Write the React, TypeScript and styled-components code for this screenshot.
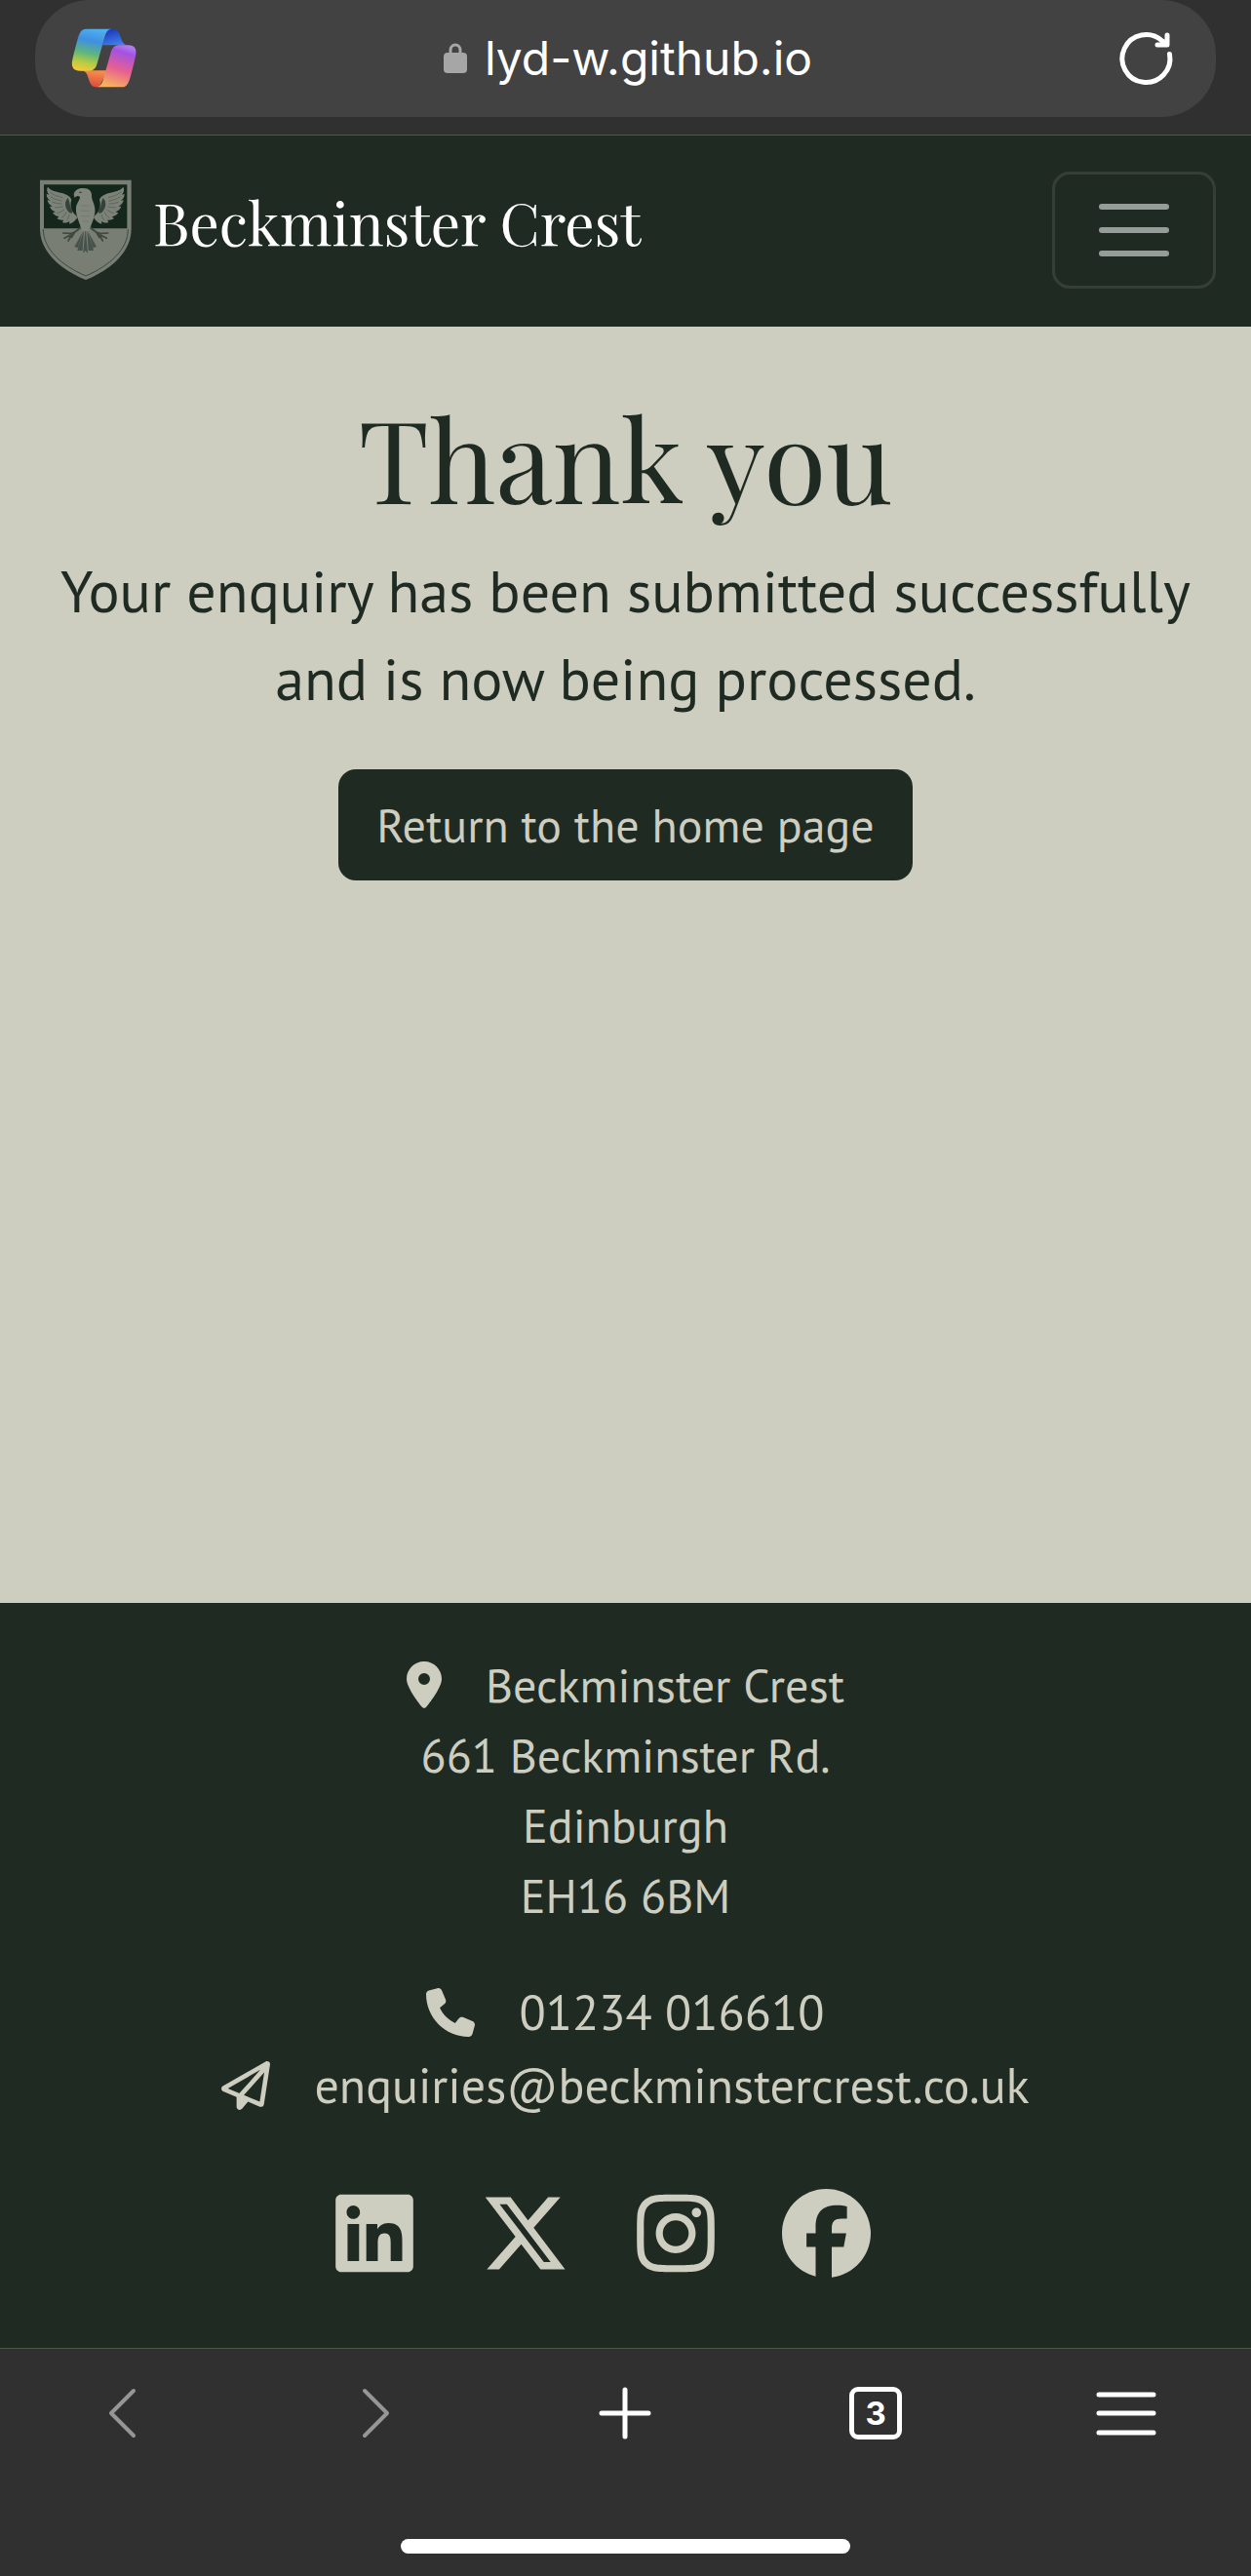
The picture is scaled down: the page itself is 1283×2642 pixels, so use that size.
import React from "react";
import styled, { createGlobalStyle, css } from "styled-components";
import {
  FaFacebook,
  FaInstagram,
  FaLinkedin,
  FaLocationDot,
  FaPhone,
  FaRegPaperPlane,
  FaXTwitter,
} from "react-icons/fa6";

const green = "#1f2b22";
const stone = "#cdcdc0";
const chrome = "#303030";
const hairline = "#4c594d";
const sans = `"PT Sans", Lato, "Noto Sans", sans-serif`;
const serif = `"Playfair Display", "Liberation Serif", serif`;

const GlobalStyle = createGlobalStyle`
  *, *::before, *::after { box-sizing: border-box; }
  body { margin: 0; background: ${chrome}; }
  h1, p, address { margin: 0; font-style: normal; font-weight: 400; }
  a { color: inherit; text-decoration: none; }
  button { font: inherit; color: inherit; background: none; border: 0; padding: 0; cursor: pointer; }
  svg { display: block; flex: none; }
`;

const Screen = styled.div`
  display: flex;
  flex-direction: column;
  min-height: 100vh;
  font-family: ${sans};
  color: ${green};
`;

const AddressBar = styled.header`
  padding: 0 36px 18px;
  background: ${chrome};
  border-bottom: 1px solid ${hairline};
`;

const AddressPill = styled.div`
  display: grid;
  grid-template-columns: 72px 1fr 72px;
  align-items: center;
  height: 120px;
  padding: 0 40px 0 37px;
  border-radius: 56px;
  background: #424242;
  color: #fff;
`;

const PillButton = styled.button<{ $end?: boolean }>`
  display: flex;
  justify-content: ${(p) => (p.$end ? "flex-end" : "flex-start")};
`;

const Url = styled.div`
  display: flex;
  align-items: center;
  justify-content: center;
  gap: 18px;
  padding-left: 8px;
  font-family: Inter, sans-serif;
  font-size: 48px;
  line-height: 60px;
`;

const Navbar = styled.nav`
  display: flex;
  align-items: center;
  justify-content: space-between;
  padding: 37px 36px 39px;
  background: ${green};
`;

const Brand = styled.a`
  display: flex;
  align-items: center;
  gap: 21px;
  padding-left: 4px;
  font-family: ${serif};
  font-size: 60px;
  line-height: 90px;
  color: #fff;
`;

const BrandName = styled.span`
  padding-bottom: 18px;
`;

const Toggler = styled.button`
  display: flex;
  flex-direction: column;
  align-items: center;
  justify-content: center;
  gap: 18px;
  width: 168px;
  height: 120px;
  border: 3px solid #353f38;
  border-radius: 18px;
`;

const TogglerLine = styled.span`
  width: 72px;
  height: 6px;
  border-radius: 3px;
  background: #969d98;
`;

const Main = styled.main`
  display: flex;
  flex: 1;
  flex-direction: column;
  align-items: center;
  padding: 63px 36px;
  background: ${stone};
  text-align: center;
`;

const Title = styled.h1`
  font-family: ${serif};
  font-size: 117px;
  line-height: 140px;
`;

const Message = styled.p`
  max-width: 1200px;
  margin-top: 23px;
  font-size: 60px;
  line-height: 90px;
`;

const HomeLink = styled.a`
  margin-top: 48px;
  padding: 21px 39px;
  border-radius: 18px;
  background: ${green};
  color: ${stone};
  font-size: 48px;
  line-height: 72px;
`;

const Footer = styled.footer`
  display: flex;
  flex-direction: column;
  align-items: center;
  padding: 48px 36px 72px;
  background: ${green};
  color: ${stone};
  text-align: center;
`;

const PostalAddress = styled.address`
  font-size: 48px;
  line-height: 72px;
`;

const iconLine = css`
  display: flex;
  align-items: center;
  justify-content: center;
  gap: 45px;
`;

const PlaceLine = styled.span`
  ${iconLine}
  svg { width: 36px; height: 48px; }
`;

const ContactLink = styled.a`
  ${iconLine}
  svg { width: 50px; height: 50px; }
`;

const Contacts = styled.div`
  margin-top: 46px;
  font-size: 50px;
  line-height: 75px;
`;

const Socials = styled.div`
  display: flex;
  align-items: center;
  gap: 69px;
  margin-top: 69px;
  padding-right: 46px;
`;

const SocialLink = styled.a<{ $narrow?: boolean }>`
  svg {
    width: ${(p) => (p.$narrow ? 80 : 91)}px;
    height: 91px;
  }
`;

const Toolbar = styled.footer`
  display: flex;
  flex-direction: column;
  align-items: center;
  justify-content: space-between;
  padding-bottom: 23px;
  height: 234px;
  background: ${chrome};
  border-top: 1px solid ${hairline};
`;

const ToolbarButtons = styled.div`
  display: grid;
  grid-template-columns: repeat(5, 1fr);
  width: 100%;
  height: 131px;
`;

const ToolButton = styled.button<{ $dim?: boolean }>`
  display: flex;
  align-items: center;
  justify-content: center;
  color: ${(p) => (p.$dim ? "#969696" : "#fff")};
`;

const TabCount = styled.span`
  display: flex;
  align-items: center;
  justify-content: center;
  width: 54px;
  height: 54px;
  border: 5px solid #fff;
  border-radius: 9px;
  font-family: Inter, sans-serif;
  font-size: 33px;
  font-weight: 700;
  line-height: 40px;
`;

const HomeIndicator = styled.div`
  width: 36%;
  height: 15px;
  border-radius: 8px;
  background: #fff;
`;

const Stroke = ({ d, sw = 5 }: { d: string; sw?: number }) => (
  <svg width="64" height="64" viewBox="0 0 64 64" fill="none" stroke="currentColor" strokeWidth={sw} strokeLinecap="round" strokeLinejoin="round" aria-hidden="true">
    <path d={d} />
  </svg>
);

const CopilotLogo = () => (
  <svg width="70" height="62" viewBox="40 28 210 186" aria-hidden="true">
    <defs>
      <linearGradient id="cpLeft" x1="0.55" y1="0" x2="0.35" y2="1">
        <stop offset="0" stopColor="#4fb0ee" />
        <stop offset="0.28" stopColor="#3f8fe3" />
        <stop offset="0.58" stopColor="#5eb57e" />
        <stop offset="0.82" stopColor="#b8cc43" />
        <stop offset="1" stopColor="#f2c93a" />
      </linearGradient>
      <linearGradient id="cpRight" x1="0.65" y1="0" x2="0.35" y2="1">
        <stop offset="0" stopColor="#b07af0" />
        <stop offset="0.15" stopColor="#a452e2" />
        <stop offset="0.55" stopColor="#e55f92" />
        <stop offset="1" stopColor="#f8b45c" />
      </linearGradient>
      <linearGradient id="cpBlue" x1="0.3" y1="0" x2="0.7" y2="1">
        <stop offset="0" stopColor="#1e35b8" />
        <stop offset="1" stopColor="#3f86ee" />
      </linearGradient>
      <linearGradient id="cpRed" x1="0.6" y1="0" x2="0.4" y2="1">
        <stop offset="0" stopColor="#f6904a" />
        <stop offset="1" stopColor="#dc4a3c" />
      </linearGradient>
    </defs>
    <path d="M152 30h12c18 0 23 10 29 28c5 15 10 22 24 22h-43c-18 0-30-1-38 0z" fill="url(#cpBlue)" />
    <path d="M66 158h86l-26 51h-10c-12 0-17-8-22-24c-5-18-9-27-28-27z" fill="url(#cpRed)" />
    <path d="M85 30h78c-12 3-16 11-20 25l-22 78c-5 18-12 26-27 26H66c-20 0-27-13-22-34c6-26 10-42 16-64c6-21 12-31 25-31z" fill="url(#cpLeft)" />
    <path d="M197 209h-78c12-3 16-11 20-25l22-78c5-18 12-26 27-26h28c20 0 27 13 22 34c-6 26-10 42-16 64c-6 21-12 31-25 31z" fill="url(#cpRight)" />
  </svg>
);

const Lock = () => (
  <svg width="24" height="32" viewBox="0 0 24 32" aria-hidden="true">
    <path d="M7 13V7.500a5 5.500 0 0 1 10 0V13" fill="none" stroke="#a6a6a6" strokeWidth="3" />
    <rect y="10" width="24" height="21" rx="4" fill="#a6a6a6" />
  </svg>
);

const wing = (
  <g>
    <path d="M148 154C134 144 128 122 134 106C130 92 112 86 100 84C84 80 70 78 61 66C56 76 60 84 66 91L57 87C57 98 62 104 70 109L60 106C62 118 68 122 76 126L67 126C71 136 77 140 85 143L76 146C82 154 88 156 96 158L89 163C96 168 104 168 110 168L106 175C114 179 124 175 128 171L127 180C138 178 148 168 152 160Z" fill="#7d8278" />
    <g fill="none" stroke="#4d584e" strokeWidth="2" strokeLinecap="round">
      <path d="M68 82C80 93 94 95 106 99" />
      <path d="M70 97C84 105 94 107 104 109" />
      <path d="M76 113C88 117 96 118 104 118" />
      <path d="M84 129C94 130 100 128 107 127" />
      <path d="M90 147C100 144 106 140 111 136" />
      <path d="M104 161C112 156 116 150 118 144" />
      <path d="M120 169C124 162 126 158 127 152" />
    </g>
    <path d="M123 100C112 110 112 130 126 144C138 152 140 142 132 130C128 120 128 108 123 100Z" fill="#35433a" />
    <path d="M164 188C152 202 144 207 130 210M138 210L108 208M138 210L112 224M136 210L124 232M144 206L134 222" fill="none" stroke="#3d493f" strokeWidth="5" strokeLinecap="round" />
  </g>
);

const Crest = () => (
  <svg width="96" height="104" viewBox="34 43 288 312" aria-hidden="true">
    <path d="M37 45H318V196C318 266 254 322 178 352C102 322 37 266 37 196Z" fill="#797e74" />
    <path d="M49 59H305V194H49Z" fill="#14271c" />
    <path d="M47 196C47 258 104 308 178 340C252 308 308 258 308 196" fill="none" stroke="#3d493f" strokeWidth="3" />
    {wing}
    <g transform="matrix(-1 0 0 1 354 0)">{wing}</g>
    <path d="M177 190L170 270L177 262L184 270ZM172 198L152 262L168 262ZM182 198L202 262L186 262ZM168 206L143 250L154 254ZM186 206L211 250L200 254Z" fill="#46524a" />
    <path d="M141 90C143 76 156 69 170 70C188 70 197 80 196 94C196 106 204 116 206 132C208 158 196 176 188 202H166C160 176 146 156 148 130C149 116 160 108 160 97C154 92 148 94 144 100Z" fill="#82877d" />
    <path d="M158 83h7" stroke="#35433a" strokeWidth="4" />
    <path d="M162 124h26M160 140h32M164 156h26M168 172h18" stroke="#6b746a" strokeWidth="2" />
  </svg>
);

const socials = [
  { name: "LinkedIn", Icon: FaLinkedin, narrow: true },
  { name: "X", Icon: FaXTwitter, narrow: false },
  { name: "Instagram", Icon: FaInstagram, narrow: true },
  { name: "Facebook", Icon: FaFacebook, narrow: false },
];

export default function App() {
  return (
    <Screen>
      <GlobalStyle />
      <AddressBar>
        <AddressPill>
          <PillButton aria-label="Copilot"><CopilotLogo /></PillButton>
          <Url><Lock /><span>lyd-w.github.io</span></Url>
          <PillButton $end aria-label="Reload">
            <Stroke d="M56.500 27.500A24.500 24.500 0 1 1 49 14L53 17.500M54 8V18H44" />
          </PillButton>
        </AddressPill>
      </AddressBar>

      <Navbar>
        <Brand href="#home">
          <Crest />
          <BrandName>Beckminster Crest</BrandName>
        </Brand>
        <Toggler aria-label="Toggle navigation">
          <TogglerLine />
          <TogglerLine />
          <TogglerLine />
        </Toggler>
      </Navbar>

      <Main>
        <Title>Thank you</Title>
        <Message>Your enquiry has been submitted successfully and is now being processed.</Message>
        <HomeLink href="#home">Return to the home page</HomeLink>
      </Main>

      <Footer>
        <PostalAddress>
          <PlaceLine><FaLocationDot />Beckminster Crest</PlaceLine>
          661 Beckminster Rd.
          <br />
          Edinburgh
          <br />
          EH16 6BM
        </PostalAddress>
        <Contacts>
          <ContactLink href="tel:01234016610"><FaPhone />01234 016610</ContactLink>
          <ContactLink href="mailto:enquiries@beckminstercrest.co.uk">
            <FaRegPaperPlane />enquiries@beckminstercrest.co.uk
          </ContactLink>
        </Contacts>
        <Socials>
          {socials.map(({ name, Icon, narrow }) => (
            <SocialLink key={name} href={`#${name.toLowerCase()}`} aria-label={name} $narrow={narrow}>
              <Icon />
            </SocialLink>
          ))}
        </Socials>
      </Footer>

      <Toolbar>
        <ToolbarButtons>
          <ToolButton $dim aria-label="Back"><Stroke d="M41 9L18 32L41 55" sw={4} /></ToolButton>
          <ToolButton $dim aria-label="Forward"><Stroke d="M21 9L44 32L21 55" sw={4} /></ToolButton>
          <ToolButton aria-label="New tab"><Stroke d="M32 8V56M8 32H56" /></ToolButton>
          <ToolButton aria-label="Tabs"><TabCount>3</TabCount></ToolButton>
          <ToolButton aria-label="Menu"><Stroke d="M4 13H60M4 32H60M4 52H60" /></ToolButton>
        </ToolbarButtons>
        <HomeIndicator />
      </Toolbar>
    </Screen>
  );
}
